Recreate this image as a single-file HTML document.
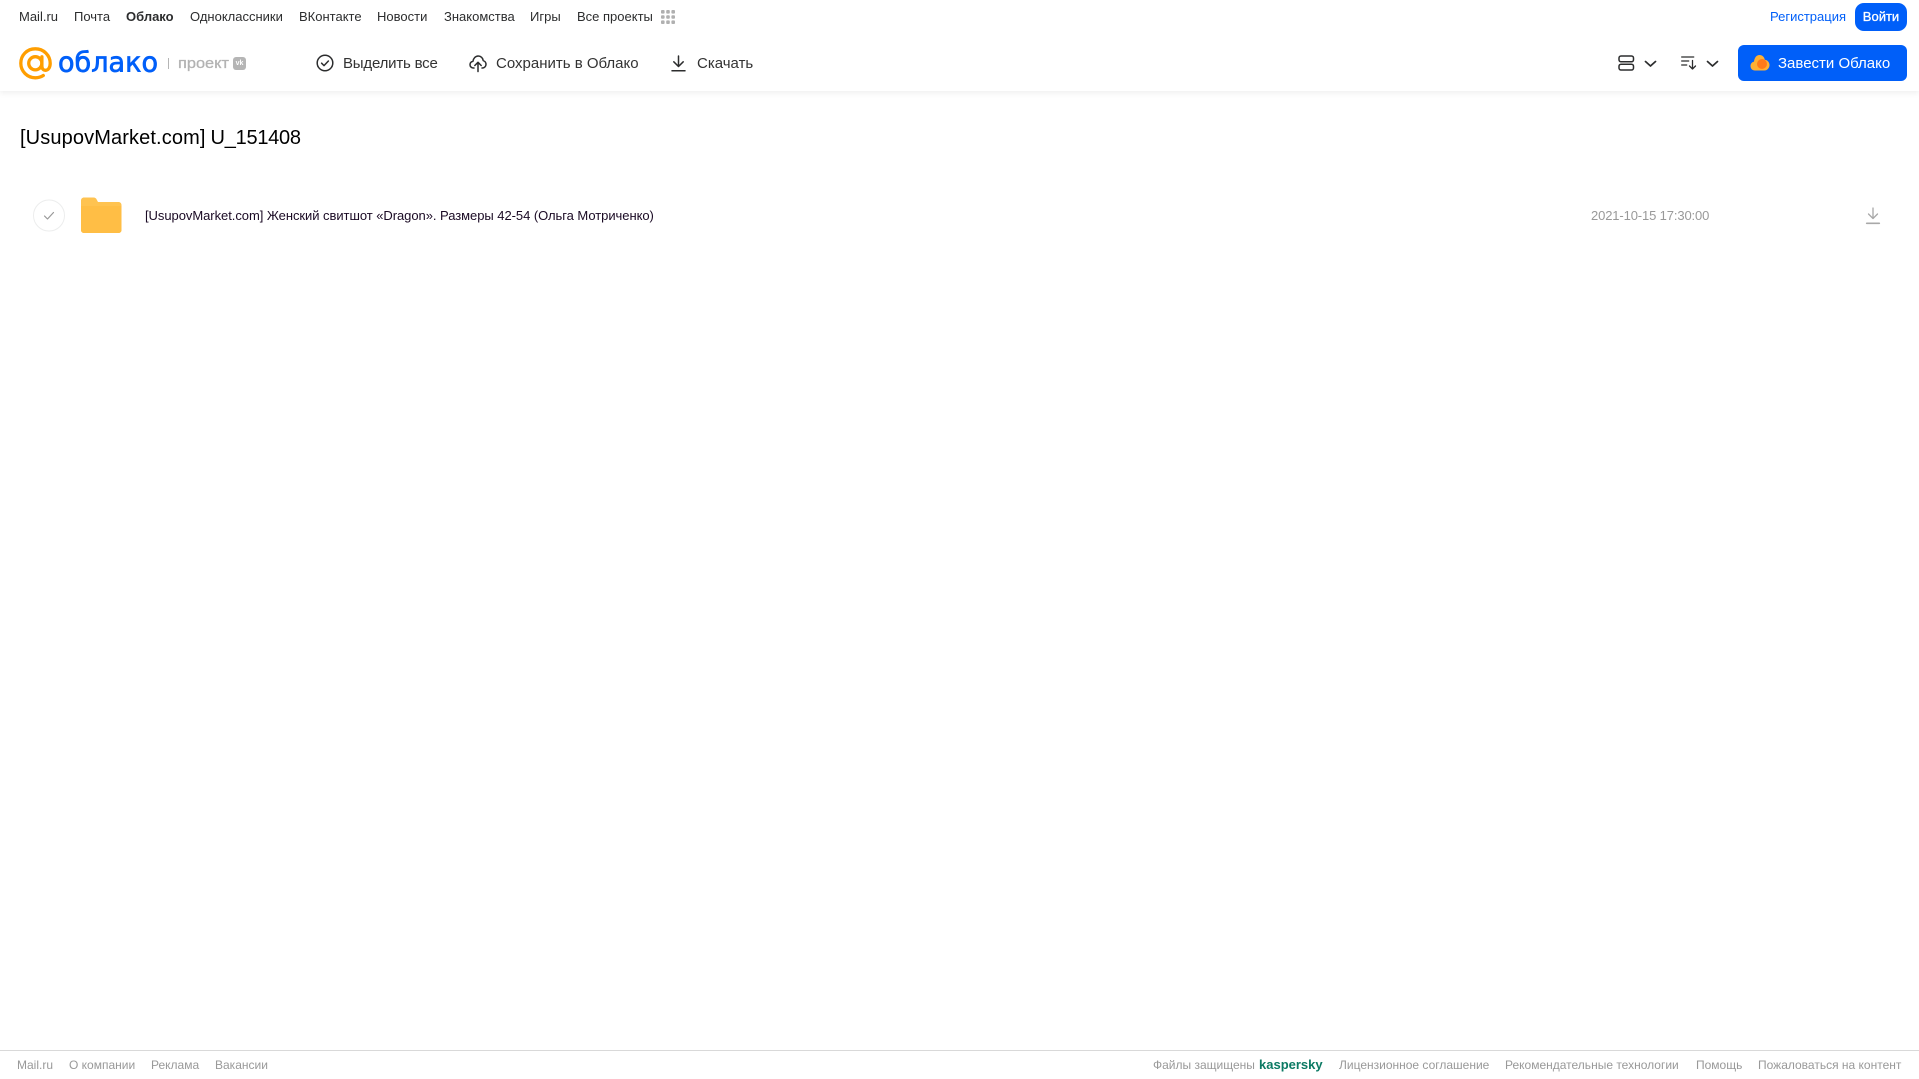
<!DOCTYPE html>
<html lang="ru">
<head>
<meta charset="utf-8">
<title>Облако</title>
<style>
html,body{margin:0;padding:0;background:#fff;}
body{width:1919px;height:1079px;position:relative;overflow:hidden;font-family:"Liberation Sans",Arial,sans-serif;}
.t{position:absolute;white-space:nowrap;line-height:20px;height:20px;}
.nav{font-size:13px;color:#2c2d2e;top:7px;}
.tb{font-size:15px;color:#333;top:54px;}
.ft{font-size:12px;color:#999;top:1055px;}
svg{position:absolute;display:block;overflow:visible;}
#hd{position:absolute;left:0;top:0;width:1919px;height:91px;background:#fff;box-shadow:0 2px 6px rgba(0,0,0,.07);}
</style>
</head>
<body>
<div id="hd"></div>

<span class="t nav" style="left:19px">Mail.ru</span>
<span class="t nav" style="left:74px">Почта</span>
<span class="t nav" style="left:126px;font-weight:bold">Облако</span>
<span class="t nav" style="left:190px">Одноклассники</span>
<span class="t nav" style="left:299px">ВКонтакте</span>
<span class="t nav" style="left:377px">Новости</span>
<span class="t nav" style="left:444px">Знакомства</span>
<span class="t nav" style="left:530px">Игры</span>
<span class="t nav" style="left:577px">Все проекты</span>
<svg style="left:661px;top:10px" width="14" height="14" fill="#b0b0b0"><rect x="0" y="0" width="3.6" height="3.6" rx="1"/><rect x="5.2" y="0" width="3.6" height="3.6" rx="1"/><rect x="10.4" y="0" width="3.6" height="3.6" rx="1"/><rect x="0" y="5.2" width="3.6" height="3.6" rx="1"/><rect x="5.2" y="5.2" width="3.6" height="3.6" rx="1"/><rect x="10.4" y="5.2" width="3.6" height="3.6" rx="1"/><rect x="0" y="10.4" width="3.6" height="3.6" rx="1"/><rect x="5.2" y="10.4" width="3.6" height="3.6" rx="1"/><rect x="10.4" y="10.4" width="3.6" height="3.6" rx="1"/></svg>

<span class="t nav" style="left:1770px;color:#005ff9">Регистрация</span>
<div style="position:absolute;left:1855px;top:3px;width:52px;height:28px;border-radius:9px;background:#005ff9;color:#fff;font-size:13px;line-height:27px;text-align:center;-webkit-text-stroke:.3px #fff">Войти</div>

<!-- logo -->
<svg style="left:19px;top:47px" width="33" height="33" viewBox="0 0 33 33" fill="none" stroke="#ff9e00" stroke-width="3.3"><circle cx="16.3" cy="16.3" r="6.6"/><path d="M22.900 9.800v9.200c0 2.800 1.600 4.300 3.500 4.300 3.200 0 4.800-3.300 4.800-7 0-8.100-6.600-14.500-14.900-14.500S1.800 8.200 1.800 16.300s6.500 14.500 14.500 14.500c3 0 5.700-.8 8-2.300" stroke-linecap="round"/></svg>
<svg style="left:56px;top:44px" width="106" height="36"><text x="2" y="27.500" font-family="DejaVu Sans" font-size="28" fill="#005ff9" stroke="#005ff9" stroke-width=".7" textLength="100" lengthAdjust="spacingAndGlyphs">облако</text></svg>
<div style="position:absolute;left:168px;top:58px;width:1px;height:11px;background:#b5b5b5"></div>
<svg style="left:178px;top:52px" width="54" height="22"><text x="0" y="16" font-family="Liberation Sans" font-size="15" fill="#b3b3b3" stroke="#b3b3b3" stroke-width=".3" textLength="51" lengthAdjust="spacingAndGlyphs">проект</text></svg>
<div style="position:absolute;left:233px;top:57px;width:13px;height:13px;border-radius:3px;background:#b5b5b5;color:#fff;font-size:7px;font-weight:bold;line-height:13px;text-align:center">vk</div>

<!-- toolbar -->
<svg style="left:316px;top:54px" width="18" height="18" fill="none" stroke="#2c2d2e" stroke-width="1.500"><circle cx="9" cy="9" r="7.800"/><path d="M5.600 9.200l2.400 2.400 4.400-4.600" stroke-linecap="round" stroke-linejoin="round"/></svg>
<span class="t tb" style="left:343px;letter-spacing:-.2px">Выделить все</span>
<svg style="left:469px;top:54px" width="18" height="18" fill="none" stroke="#2c2d2e" stroke-width="1.500" stroke-linecap="round" stroke-linejoin="round"><path d="M5 14H4.500C2.500 14 1 12.500 1 10.700c0-1.700 1.200-3 2.900-3.300C4.400 4.300 6.500 2 9.200 2c2.600 0 4.700 2 5 4.600 1.600.4 2.800 2 2.800 3.700 0 2-1.500 3.700-3.500 3.700H13"/><path d="M9 17.500V8.500M5.800 11.500L9 8.300l3.200 3.200"/></svg>
<span class="t tb" style="left:496px">Сохранить в Облако</span>
<svg style="left:671px;top:55px" width="15" height="17" fill="none" stroke="#2c2d2e" stroke-width="1.500" stroke-linecap="round" stroke-linejoin="round"><path d="M7.500 1v10M2.800 6.800l4.700 4.700 4.700-4.700M1 15.800h13"/></svg>
<span class="t tb" style="left:697px">Скачать</span>

<!-- view/sort -->
<svg style="left:1618px;top:55px" width="16" height="16" fill="none" stroke="#2c2d2e" stroke-width="1.500"><rect x="1" y="1" width="14.500" height="5.800" rx="2"/><rect x="1" y="9.200" width="14.500" height="5.800" rx="2"/></svg>
<svg style="left:1644px;top:60px" width="13" height="8" fill="none" stroke="#2c2d2e" stroke-width="1.700" stroke-linecap="round" stroke-linejoin="round"><path d="M1.500 1.500L6.500 6l5-4.500"/></svg>
<svg style="left:1681px;top:56px" width="16" height="14" fill="none" stroke="#2c2d2e" stroke-width="1.300" stroke-linecap="round" stroke-linejoin="round"><path d="M.7 1h12M.7 5h7M.7 9h5M11.500 4.500V13M8.500 10l3 3 3-3"/></svg>
<svg style="left:1706px;top:60px" width="13" height="8" fill="none" stroke="#2c2d2e" stroke-width="1.700" stroke-linecap="round" stroke-linejoin="round"><path d="M1.500 1.500L6.500 6l5-4.500"/></svg>

<div style="position:absolute;left:1738px;top:45px;width:169px;height:36px;border-radius:6px;background:#005ff9"></div>
<svg style="left:1750px;top:54px" width="20" height="17"><path d="M5 16.500C2.200 16.500 .5 14.500.5 12c0-2.300 1.500-4 3.500-4.400C4.500 3.500 6.500 1 9.500 1c2.800 0 4.800 2 5.300 4.700 2.700.3 4.700 2.500 4.700 5.300 0 3-2.300 5.500-5 5.500z" fill="#ffb033"/><circle cx="12" cy="10" r="5" fill="#ff7a1a"/></svg>
<span class="t tb" style="left:1778px;color:#fff">Завести Облако</span>

<!-- title -->
<span class="t" style="left:20px;top:126px;font-size:20px;line-height:24px;height:24px;letter-spacing:.12px;color:#000">[UsupovMarket.com]</span>
<span class="t" style="left:210.500px;top:126px;font-size:20px;line-height:24px;height:24px;letter-spacing:-.25px;color:#000">U_151408</span>

<!-- row -->
<svg style="left:33px;top:199px" width="33" height="33" fill="none"><circle cx="16" cy="16.500" r="15.500" stroke="#eceded"/><path d="M11.500 17l3 3 6-6.500" stroke="#999" stroke-width="1.200" stroke-linecap="round" stroke-linejoin="round"/></svg>
<svg style="left:81px;top:197px" width="41" height="36"><path d="M0 3.500C0 1.800 1.300.5 3 .5h9.500c1.700 0 2.700.9 3.300 2.200L17 5h20.500c1.700 0 3 1.300 3 3v25c0 1.700-1.300 3-3 3H3c-1.700 0-3-1.300-3-3z" fill="#ffc350"/><path d="M0 9h40.500v24c0 1.700-1.300 3-3 3H3c-1.700 0-3-1.300-3-3z" fill="#ffbe45"/></svg>
<span class="t" style="left:145px;top:206px;font-size:13px;letter-spacing:-.05px;color:#1a0a24">[UsupovMarket.com] Женский свитшот «Dragon». Размеры 42-54 (Ольга Мотриченко)</span>
<span class="t" style="left:1591px;top:206px;font-size:13px;letter-spacing:-.13px;color:#999">2021-10-15 17:30:00</span>
<svg style="left:1866px;top:207px" width="14" height="18" fill="none" stroke="#a8a8a8" stroke-width="1.300" stroke-linecap="round" stroke-linejoin="round"><path d="M7 1v10.500M2.500 7L7 11.500 11.500 7"/><path d="M.7 16.300h12.600" stroke-width="1.600"/></svg>

<!-- footer -->
<div style="position:absolute;left:0;top:1050px;width:1919px;height:1px;background:#d9d9d9"></div>
<span class="t ft" style="left:17px">Mail.ru</span>
<span class="t ft" style="left:69px">О компании</span>
<span class="t ft" style="left:151px">Реклама</span>
<span class="t ft" style="left:215px">Вакансии</span>
<span class="t ft" style="left:1153px">Файлы защищены</span>
<span class="t ft" style="left:1259px;color:#0c7a64;font-weight:bold;font-size:13px">kaspersky</span>
<span class="t ft" style="left:1339px">Лицензионное соглашение</span>
<span class="t ft" style="left:1505px">Рекомендательные технологии</span>
<span class="t ft" style="left:1696px">Помощь</span>
<span class="t ft" style="left:1758px">Пожаловаться на контент</span>
</body>
</html>
